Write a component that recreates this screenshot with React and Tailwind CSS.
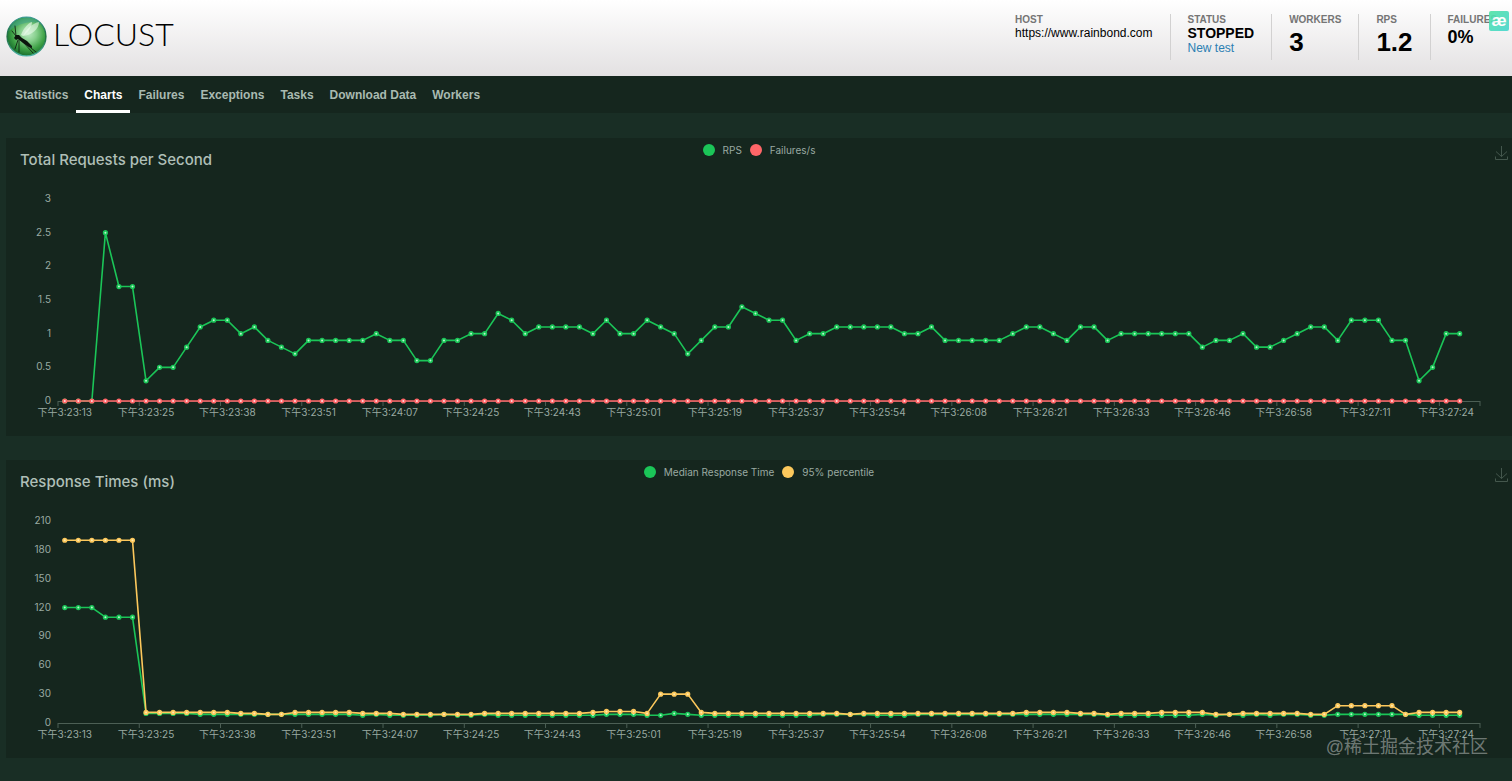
import { useLayoutEffect, useRef, useState } from 'react'

const TABS = ['Statistics', 'Charts', 'Failures', 'Exceptions', 'Tasks', 'Download Data', 'Workers']

const TIMES = [
  '3:23:13', '3:23:25', '3:23:38', '3:23:51', '3:24:07', '3:24:25',
  '3:24:43', '3:25:01', '3:25:19', '3:25:37', '3:25:54', '3:26:08',
  '3:26:21', '3:26:33', '3:26:46', '3:26:58', '3:27:11', '3:27:24',
]

const SLOTS = 105
const LABEL_EVERY = 6

const RPS = [
  0, 0, 0, 2.5, 1.7, 1.7, 0.3, 0.5, 0.5, 0.8, 1.1, 1.2, 1.2, 1, 1.1, 0.9, 0.8, 0.7, 0.9, 0.9,
  0.9, 0.9, 0.9, 1, 0.9, 0.9, 0.6, 0.6, 0.9, 0.9, 1, 1, 1.3, 1.2, 1, 1.1, 1.1, 1.1, 1.1, 1,
  1.2, 1, 1, 1.2, 1.1, 1, 0.7, 0.9, 1.1, 1.1, 1.4, 1.3, 1.2, 1.2, 0.9, 1, 1, 1.1, 1.1, 1.1,
  1.1, 1.1, 1, 1, 1.1, 0.9, 0.9, 0.9, 0.9, 0.9, 1, 1.1, 1.1, 1, 0.9, 1.1, 1.1, 0.9, 1, 1,
  1, 1, 1, 1, 0.8, 0.9, 0.9, 1, 0.8, 0.8, 0.9, 1, 1.1, 1.1, 0.9, 1.2, 1.2, 1.2, 0.9, 0.9,
  0.3, 0.5, 1, 1,
]

const FAILURES = RPS.map(() => 0)

const MEDIAN = [
  120, 120, 120, 110, 110, 110, 10, 10, 10, 10, 9, 9, 9, 9, 9, 9, 9, 9, 9, 9,
  9, 9, 8, 9, 8, 8, 8, 8, 9, 8, 8, 9, 8, 8, 8, 8, 8, 8, 8, 8,
  9, 9, 9, 8, 8, 10, 9, 8, 8, 8, 8, 8, 8, 8, 8, 8, 9, 9, 9, 9,
  8, 8, 8, 9, 9, 9, 9, 9, 9, 9, 9, 9, 9, 9, 9, 9, 9, 8, 8, 8,
  8, 8, 8, 8, 9, 8, 9, 8, 9, 8, 9, 9, 8, 8, 9, 9, 9, 9, 9, 9,
  8, 8, 8, 8,
]

const P95 = [
  190, 190, 190, 190, 190, 190, 11, 11, 11, 11, 11, 11, 11, 10, 10, 9, 9, 11, 11, 11,
  11, 11, 10, 10, 10, 9, 9, 9, 9, 9, 9, 10, 10, 10, 10, 10, 10, 10, 10, 11,
  12, 12, 12, 10, 30, 30, 30, 11, 10, 10, 10, 10, 10, 10, 10, 10, 10, 10, 9, 10,
  10, 10, 10, 10, 10, 10, 10, 10, 10, 10, 10, 11, 11, 11, 11, 10, 10, 9, 10, 10,
  10, 11, 11, 11, 11, 9, 9, 10, 10, 10, 10, 10, 9, 9, 18, 18, 18, 18, 18, 9,
  11, 11, 11, 11,
]

const RPS_SERIES = [
  { name: 'RPS', data: RPS, color: '#1bc558', fill: '#b9f7cd' },
  { name: 'Failures/s', data: FAILURES, color: '#ff6668', fill: '#ffdcdc' },
]

const TIME_SERIES = [
  { name: 'Median Response Time', data: MEDIAN, color: '#1bc558', fill: '#b9f7cd' },
  { name: '95% percentile', data: P95, color: '#fcc85c', fill: '#ffeab0' },
]

function Logo() {
  return (
    <a href="#" className="flex items-start gap-[6px]">
      <svg width="41" height="41" viewBox="0 0 41 41" aria-hidden="true">
        <defs>
          <radialGradient id="orb" cx="0.55" cy="0.42" r="0.6">
            <stop offset="0" stopColor="#bdebc4" />
            <stop offset="0.35" stopColor="#86cf8c" />
            <stop offset="0.7" stopColor="#3da045" />
            <stop offset="1" stopColor="#176a2c" />
          </radialGradient>
          <linearGradient id="rim" x1="0" y1="0" x2="0" y2="1">
            <stop offset="0" stopColor="#3d9c96" />
            <stop offset="0.5" stopColor="#1d6a3c" />
            <stop offset="1" stopColor="#4db3a6" />
          </linearGradient>
        </defs>
        <circle cx="20.5" cy="20.5" r="19.4" fill="url(#orb)" stroke="url(#rim)" strokeWidth="1.4" />
        <path d="M3 15C5 7 13 2 21 2c5 0 9 2 12 5-9-2-20 0-30 8z" fill="#3fa08c" opacity="0.55" />
        <path d="M15 19C17 13 22 7 26 6c0 5-4 10-9 14z" fill="#f0fdf0" opacity="0.6" />
        <path d="M17 20C20 13 27 7 33 6c0 7-7 13-16 14z" fill="#f0fdf0" opacity="0.55" />
        <path d="M8 22l2-3 3 0 3 3 5 3 5 5 0 2-3-1-6-4-5-4-2 1z" fill="#0b150d" />
        <g fill="none" stroke="#0b150d" strokeWidth="0.8" strokeLinecap="round">
          <path d="M10 20L9 10M10 20L6 15M13 24v12M12 24l-3 9M17 26l10 11M20 28l10 8" />
        </g>
      </svg>
      <span className="font-[Lato,sans-serif] text-[32px] leading-[36px] font-light text-black">LOCUST</span>
    </a>
  )
}

function Stat({ label, children }) {
  return (
    <div className="h-[46px] shrink-0 border-l border-[#d2d1d1] px-[17px] first:border-l-0 last:pr-[15px]">
      <div className="text-[10px] leading-[12px] font-bold text-[#757575]">{label}</div>
      {children}
    </div>
  )
}

function Header() {
  return (
    <header className="relative flex h-[76px] items-start justify-between bg-linear-to-b from-white to-[#e3e1e2] pl-[6px]">
      <div className="pt-4">
        <Logo />
      </div>
      <div className="flex pt-[14px] text-black">
        <Stat label="HOST">
          <div className="text-xs leading-[15px]">https://www.rainbond.com</div>
        </Stat>
        <Stat label="STATUS">
          <div className="text-sm leading-[15px] font-bold">STOPPED</div>
          <a href="#" className="block text-xs leading-[15px] text-[#2b7fb3]">New test</a>
        </Stat>
        <Stat label="WORKERS">
          <div className="text-[26px] leading-[32px] font-bold">3</div>
        </Stat>
        <Stat label="RPS">
          <div className="text-[26px] leading-[32px] font-bold">1.2</div>
        </Stat>
        <Stat label="FAILURES">
          <div className="text-[18px] leading-[22px] font-bold">0%</div>
        </Stat>
      </div>
      <button
        type="button"
        className="absolute top-[11px] right-[3px] flex size-[20px] items-center justify-center rounded-[2px] bg-linear-to-br from-[#52e3a4] to-[#45d6cf] pb-px text-[17px] leading-[18px] font-bold text-white opacity-90"
      >
        æ
      </button>
    </header>
  )
}

function Nav() {
  const [active, setActive] = useState('Charts')

  return (
    <nav className="flex h-[37px] bg-[#15261e] px-[7px]">
      {TABS.map((tab) => (
        <button
          key={tab}
          type="button"
          onClick={() => setActive(tab)}
          className={
            tab === active
              ? 'border-b-3 border-white px-2 pt-1 text-xs font-bold text-white'
              : 'border-b-3 border-transparent px-2 pt-1 text-xs font-bold text-[#a9bab1]'
          }
        >
          {tab}
        </button>
      ))}
    </nav>
  )
}

function Plot({ series, max, step, title }) {
  const box = useRef(null)
  const [width, setWidth] = useState(1506)

  useLayoutEffect(() => {
    const update = () => setWidth(box.current.clientWidth)
    update()
    window.addEventListener('resize', update)
    return () => window.removeEventListener('resize', update)
  }, [])

  const left = 52
  const right = width - 32
  const top = 13
  const bottom = 215
  const slot = (right - left) / SLOTS
  const x = (i) => left + slot * (i + 0.5)
  const y = (v) => bottom - (v / max) * (bottom - top)

  const ticks = []
  for (let v = 0; v <= max; v += step) ticks.push(v)

  const marks = []
  for (let i = 0; i <= SLOTS; i += LABEL_EVERY) marks.push(i)
  marks.push(SLOTS)

  return (
    <div ref={box} className="h-[250px]">
      <svg
        width={width}
        height="250"
        role="img"
        aria-label={title}
        className="block font-[Inter,'Noto_Sans_CJK_SC',sans-serif] text-[10px]"
      >
        {ticks.map((v) => (
          <text key={v} x={left - 7} y={y(v) + 3} textAnchor="end" fill="#9aaaa2">{v}</text>
        ))}
        <path
          d={`M${left} ${bottom + 0.5}H${right}` + marks.map((i) => `M${left + slot * i} ${bottom}v5`).join('')}
          stroke="#4c5f55"
          fill="none"
        />
        {TIMES.map((t, i) => (
          <text key={t} x={x(i * LABEL_EVERY)} y={bottom + 15} textAnchor="middle" fill="#9aaaa2">
            下午{t}
          </text>
        ))}
        {series.map((s) => (
          <g key={s.name} stroke={s.color}>
            <polyline
              points={s.data.map((v, i) => `${x(i)},${y(v)}`).join(' ')}
              fill="none"
              strokeWidth="1.6"
              strokeLinejoin="bevel"
            />
            {s.data.map((v, i) => (
              <circle key={i} cx={x(i)} cy={y(v)} r="1.8" fill={s.fill} strokeWidth="1.6" />
            ))}
          </g>
        ))}
      </svg>
    </div>
  )
}

function ChartCard({ title, series, max, step }) {
  const [hidden, setHidden] = useState([])

  const toggle = (name) => {
    setHidden(hidden.includes(name) ? hidden.filter((n) => n !== name) : [...hidden, name])
  }

  return (
    <section className="ml-[6px] bg-[#15261e]">
      <div className="grid h-12 grid-cols-[1fr_auto_1fr] items-start">
        <h2 className="pt-3 pl-[14px] font-[Inter,sans-serif] text-[15px] leading-[20px] font-medium text-[#afbfb7]">
          {title}
        </h2>
        <div className="flex gap-2 pt-1">
          {series.map((s) => (
            <button
              key={s.name}
              type="button"
              onClick={() => toggle(s.name)}
              className="flex items-center gap-2 font-[Inter,sans-serif] text-[10px] leading-[16px] text-[#9aaaa2]"
            >
              <span className="size-3 rounded-full" style={{ backgroundColor: s.color }} />
              {s.name}
            </button>
          ))}
        </div>
        <button type="button" aria-label="Save as image" className="justify-self-end pt-2 pr-1">
          <svg width="13" height="14" viewBox="0 0 13 14" fill="none" stroke="#44574d">
            <path d="M6.5 0v10.5M1 5.5l5.5 5 5.5-5M0.5 10.5v3h12v-3" />
          </svg>
        </button>
      </div>
      <Plot title={title} series={series.filter((s) => !hidden.includes(s.name))} max={max} step={step} />
    </section>
  )
}

export default function App() {
  return (
    <div className="relative min-h-screen overflow-x-hidden bg-[#192e25] font-['Liberation_Sans',Arial,sans-serif]">
      <Header />
      <Nav />
      <main className="flex flex-col gap-6 pt-[25px] pb-[23px]">
        <ChartCard title="Total Requests per Second" series={RPS_SERIES} max={3} step={0.5} />
        <ChartCard title="Response Times (ms)" series={TIME_SERIES} max={210} step={30} />
      </main>
      <div className="pointer-events-none absolute right-6 bottom-[22px] font-['Liberation_Sans','Noto_Sans_CJK_SC',sans-serif] text-[18px] leading-[24px] text-white/40">
        @稀土掘金技术社区
      </div>
    </div>
  )
}
